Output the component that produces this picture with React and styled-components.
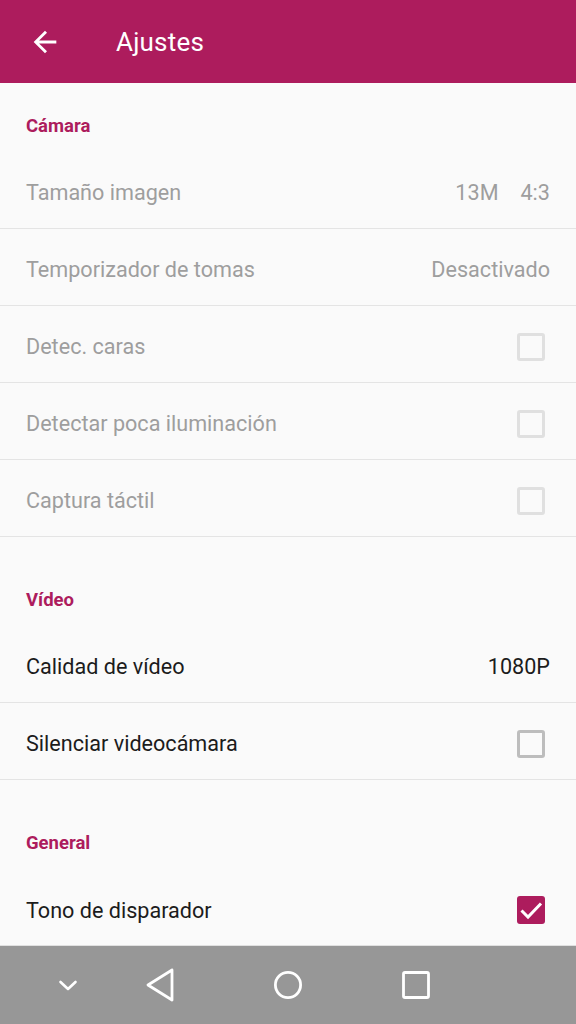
import React from 'react';
import styled, { createGlobalStyle } from 'styled-components';

const accent = '#ad1c5d';

const Global = createGlobalStyle`
  html, body { margin: 0; padding: 0; background: #fafafa; }
  body { font-family: Roboto, "Noto Sans", sans-serif; }
`;

const Screen = styled.div`
  width: 576px;
  height: 1024px;
  display: flex;
  flex-direction: column;
  background: #fafafa;
  overflow: hidden;
`;

const AppBar = styled.header`
  height: 83px;
  flex: none;
  background: ${accent};
  display: flex;
  align-items: center;
  color: #fff;
  padding-left: 28px;
  gap: 54px;
`;

const Title = styled.h1`
  margin: 0;
  font-size: 26px;
  font-weight: 400;
  letter-spacing: 0.2px;
`;

const List = styled.main`
  flex: 1;
  overflow: hidden;
`;

const SectionTitle = styled.div`
  height: 69px;
  padding: 17px 26px 0;
  margin-top: ${(p) => (p.$first ? '0' : '20px')};
  display: flex;
  align-items: center;
  color: ${accent};
  font-size: 18.5px;
  font-weight: 700;
  box-sizing: border-box;
`;

const Row = styled.div`
  height: 77px;
  padding: 5px 26px 0;
  display: flex;
  align-items: center;
  justify-content: space-between;
  box-sizing: border-box;
  border-bottom: ${(p) => (p.$last ? 'none' : '1px solid #e4e4e4')};
  color: ${(p) => (p.$disabled ? '#9e9e9e' : '#1c1c1c')};
  font-size: 21.6px;
`;

const Values = styled.div`
  display: flex;
  gap: 22px;
`;

const Box = styled.div`
  width: 28px;
  height: 28px;
  box-sizing: border-box;
  margin-right: 5px;
  border-radius: 3px;
  border: ${(p) => (p.$checked ? 'none' : `3px solid ${p.$disabled ? '#e0e0e0' : '#bdbdbd'}`)};
  background: ${(p) => (p.$checked ? accent : 'transparent')};
  display: flex;
  align-items: center;
  justify-content: center;
`;

const NavBar = styled.nav`
  height: 78px;
  flex: none;
  background: #979797;
  border-top: 1px solid #e0e0e0;
  display: grid;
  grid-template-columns: 136px 48px 208px 48px;
  align-items: center;
  justify-items: center;
`;

const Check = ({ checked, disabled }) => (
  <Box $checked={checked} $disabled={disabled}>
    {checked && (
      <svg width="28" height="28" viewBox="0 0 28 28">
        <path d="M4.5 14.5l6.5 6.5L24 7.5" fill="none" stroke="#fff" strokeWidth="3" />
      </svg>
    )}
  </Box>
);

const sections = [
  {
    title: 'Cámara',
    rows: [
      { label: 'Tamaño imagen', values: ['13M', '4:3'], disabled: true },
      { label: 'Temporizador de tomas', values: ['Desactivado'], disabled: true },
      { label: 'Detec. caras', check: false, disabled: true },
      { label: 'Detectar poca iluminación', check: false, disabled: true },
      { label: 'Captura táctil', check: false, disabled: true },
    ],
  },
  {
    title: 'Vídeo',
    rows: [
      { label: 'Calidad de vídeo', values: ['1080P'] },
      { label: 'Silenciar videocámara', check: false },
    ],
  },
  {
    title: 'General',
    rows: [{ label: 'Tono de disparador', check: true, last: true }],
  },
];

export default function App() {
  return (
    <Screen>
      <Global />
      <AppBar>
        <svg width="34" height="34" viewBox="0 0 24 24">
          <path d="M20 11H7.83l5.59-5.59L12 4l-8 8 8 8 1.41-1.41L7.83 13H20v-2z" fill="#fff" />
        </svg>
        <Title>Ajustes</Title>
      </AppBar>
      <List>
        {sections.map((s, i) => (
          <section key={s.title}>
            <SectionTitle $first={i === 0}>{s.title}</SectionTitle>
            {s.rows.map((r) => (
              <Row key={r.label} $disabled={r.disabled} $last={r.last}>
                <span>{r.label}</span>
                {r.values ? (
                  <Values>
                    {r.values.map((v) => (
                      <span key={v}>{v}</span>
                    ))}
                  </Values>
                ) : (
                  <Check checked={r.check} disabled={r.disabled} />
                )}
              </Row>
            ))}
          </section>
        ))}
      </List>
      <NavBar>
        <svg width="24" height="24" viewBox="0 0 24 24">
          <path d="M4.5 9l7.5 7 7.5-7" fill="none" stroke="#fff" strokeWidth="2.6" strokeLinecap="round" strokeLinejoin="round" />
        </svg>
        <svg width="30" height="34" viewBox="0 0 30 34">
          <path d="M27 2L3 17l24 15z" fill="none" stroke="#fff" strokeWidth="2.8" strokeLinejoin="round" />
        </svg>
        <svg width="30" height="30" viewBox="0 0 30 30">
          <circle cx="15" cy="15" r="12.6" fill="none" stroke="#fff" strokeWidth="2.8" />
        </svg>
        <svg width="28" height="28" viewBox="0 0 28 28">
          <rect x="1.5" y="1.5" width="25" height="25" rx="1.5" fill="none" stroke="#fff" strokeWidth="2.8" />
        </svg>
      </NavBar>
    </Screen>
  );
}
